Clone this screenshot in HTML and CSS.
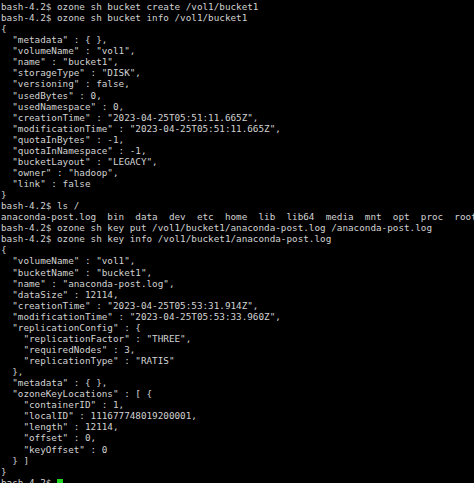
FILE: index.html
```html
<!DOCTYPE html>
<html>
<head>
<meta charset="utf-8">
<link rel="stylesheet" href="styles.css">
</head>
<body>
<pre class="term">bash-4.2$ ozone sh bucket create /vol1/bucket1
bash-4.2$ ozone sh bucket info /vol1/bucket1
{
  "metadata" : { },
  "volumeName" : "vol1",
  "name" : "bucket1",
  "storageType" : "DISK",
  "versioning" : false,
  "usedBytes" : 0,
  "usedNamespace" : 0,
  "creationTime" : "2023-04-25T05:51:11.665Z",
  "modificationTime" : "2023-04-25T05:51:11.665Z",
  "quotaInBytes" : -1,
  "quotaInNamespace" : -1,
  "bucketLayout" : "LEGACY",
  "owner" : "hadoop",
  "link" : false
}
bash-4.2$ ls /
anaconda-post.log  bin  data  dev  etc  home  lib  lib64  media  mnt  opt  proc  root
bash-4.2$ ozone sh key put /vol1/bucket1/anaconda-post.log /anaconda-post.log
bash-4.2$ ozone sh key info /vol1/bucket1/anaconda-post.log
{
  "volumeName" : "vol1",
  "bucketName" : "bucket1",
  "name" : "anaconda-post.log",
  "dataSize" : 12114,
  "creationTime" : "2023-04-25T05:53:31.914Z",
  "modificationTime" : "2023-04-25T05:53:33.960Z",
  "replicationConfig" : {
    "replicationFactor" : "THREE",
    "requiredNodes" : 3,
    "replicationType" : "RATIS"
  },
  "metadata" : { },
  "ozoneKeyLocations" : [ {
    "containerID" : 1,
    "localID" : 111677748019200001,
    "length" : 12114,
    "offset" : 0,
    "keyOffset" : 0
  } ]
}
bash-4.2$ <span class="cursor"></span></pre>
</body>
</html>
```
FILE: styles.css
```css
html, body {
  margin: 0;
  padding: 0;
  background: #000;
  overflow: hidden;
}
.term {
  margin: 0;
  padding: 1px 0 0 1px;
  font-family: "DejaVu Sans Mono", monospace;
  font-size: 9.3px;
  line-height: 11.07px;
  color: #d2d2d2;
  white-space: pre;
}
.cursor {
  display: inline-block;
  width: 6px;
  height: 9px;
  background: #1fd31f;
  vertical-align: -2px;
}
```
